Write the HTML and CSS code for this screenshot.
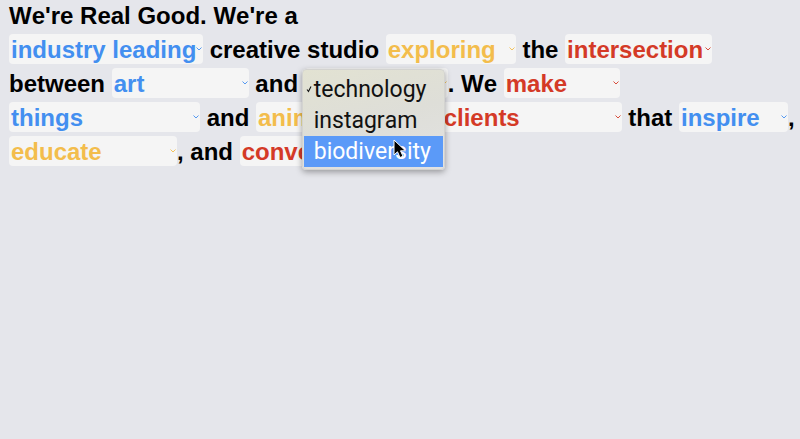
FILE: index.html
```html
<!DOCTYPE html>
<html lang="en">
<head>
<meta charset="utf-8">
<meta name="viewport" content="width=device-width, initial-scale=1">
<title>We're Real Good</title>
<link rel="stylesheet" href="styles.css">
</head>
<body>
<svg class="defs" aria-hidden="true"><symbol id="chevron" viewBox="0 0 6 4"><path d="M.5 .5l2.500 2.500L5.500 .5" fill="none" stroke="currentColor" stroke-width="0.9"/></symbol></svg>
<main class="statement">
<div class="line">We're Real Good. We're a</div>
<div class="line"><span class="pick blue w-industry"><select aria-label="Kind of studio"><option>industry leading</option></select><svg class="chevron"><use href="#chevron"/></svg></span> creative studio <span class="pick yellow w-exploring"><select aria-label="Activity"><option>exploring</option></select><svg class="chevron"><use href="#chevron"/></svg></span> the <span class="pick red w-intersection"><select aria-label="Place"><option>intersection</option></select><svg class="chevron"><use href="#chevron"/></svg></span></div>
<div class="line">between <span class="pick blue w-art"><select aria-label="First field"><option>art</option></select><svg class="chevron"><use href="#chevron"/></svg></span> and <span class="pick yellow w-technology"><select aria-label="Second field"><option>technology</option><option>instagram</option><option>biodiversity</option></select><svg class="chevron"><use href="#chevron"/></svg>
<span class="menu" role="listbox" aria-label="Second field options"><span class="item" role="option" aria-selected="true"><svg class="check" viewBox="0 0 6 8"><path d="M1 4.500l1.500 2L5 1.500" fill="none" stroke="currentColor" stroke-width="1.100"/></svg>technology</span><span class="item" role="option" aria-selected="false">instagram</span><span class="item active" role="option" aria-selected="false">biodiversity</span><svg class="cursor" viewBox="0 0 14 20"><path d="M1 1v15l3.500-3.200 2.500 5.700 3-1.300-2.500-5.400h5z" fill="#000" stroke="#fff" stroke-width="1"/></svg></span></span>. We <span class="pick red w-make"><select aria-label="Verb"><option>make</option></select><svg class="chevron"><use href="#chevron"/></svg></span></div>
<div class="line"><span class="pick blue w-things"><select aria-label="First product"><option>things</option></select><svg class="chevron"><use href="#chevron"/></svg></span> and <span class="pick yellow w-animations"><select aria-label="Second product"><option>anim</option></select><svg class="chevron"><use href="#chevron"/></svg></span> <span class="pick red w-clients"><select aria-label="Audience"><option>clients</option></select><svg class="chevron"><use href="#chevron"/></svg></span> that <span class="pick blue w-inspire"><select aria-label="First effect"><option>inspire</option></select><svg class="chevron"><use href="#chevron"/></svg></span>,</div>
<div class="line"><span class="pick yellow w-educate"><select aria-label="Second effect"><option>educate</option></select><svg class="chevron"><use href="#chevron"/></svg></span>, and <span class="pick red w-converse"><select aria-label="Third effect"><option>converse</option></select><svg class="chevron"><use href="#chevron"/></svg></span></div>
</main>
</body>
</html>
```
FILE: styles.css
```css
body {
  margin: 0;
  background: #e5e6eb;
  color: #000;
  font-family: "Liberation Sans", Arial, sans-serif;
}

.defs {
  display: none;
}

.statement {
  box-sizing: border-box;
  min-height: 100vh;
  margin-top: -1px;
  padding: 0 9px;
  font-size: 24px;
  font-weight: 700;
  font-kerning: none;
  line-height: 34px;
}

.line {
  height: 34px;
  white-space: nowrap;
}

.pick {
  display: inline-block;
  position: relative;
  line-height: 30px;
}

.pick select {
  appearance: none;
  box-sizing: border-box;
  display: block;
  width: 100%;
  height: 30px;
  margin: 0;
  padding: 2px 2px 0;
  border: 0;
  border-radius: 4px;
  background: #f5f5f5;
  color: inherit;
  font: inherit;
  font-kerning: none;
  line-height: 28px;
}

.blue { color: #438ff0; }
.yellow { color: #f3bd4c; }
.red { color: #d43a27; }

.w-industry { width: 194px; }
.w-exploring { width: 130px; }
.w-intersection { width: 147px; }
.w-art { width: 137px; }
.w-technology { width: 143px; }
.w-make { width: 116px; }
.w-things { width: 191px; }
.w-animations { width: 179px; }
.w-clients { width: 180px; }
.w-inspire { width: 109px; }
.w-educate { width: 168px; }
.w-converse { width: 120px; }

.chevron {
  position: absolute;
  top: 13px;
  right: 1px;
  width: 6px;
  height: 4px;
}

.menu {
  position: absolute;
  z-index: 1;
  top: 1px;
  left: -3px;
  box-sizing: border-box;
  width: 143px;
  padding: 4px 1px 2px;
  border: 1px solid #d3d3d0;
  border-radius: 4px;
  background: linear-gradient(165deg, #e2e2d2, #deded8 50%, #e2e2e2);
  box-shadow: 0 2px 6px rgba(0, 0, 0, 0.35);
  color: #111;
  font-family: Roboto, Inter, sans-serif;
  font-size: 23px;
  font-weight: 400;
}

.item {
  display: block;
  position: relative;
  padding-left: 10px;
  line-height: 31px;
}

.active {
  background: #5b9af8;
  color: #fff;
}

.check {
  position: absolute;
  top: 11px;
  left: 2px;
  width: 6px;
  height: 8px;
}

.cursor {
  position: absolute;
  top: 69px;
  left: 90px;
  width: 14px;
  height: 20px;
}
```
